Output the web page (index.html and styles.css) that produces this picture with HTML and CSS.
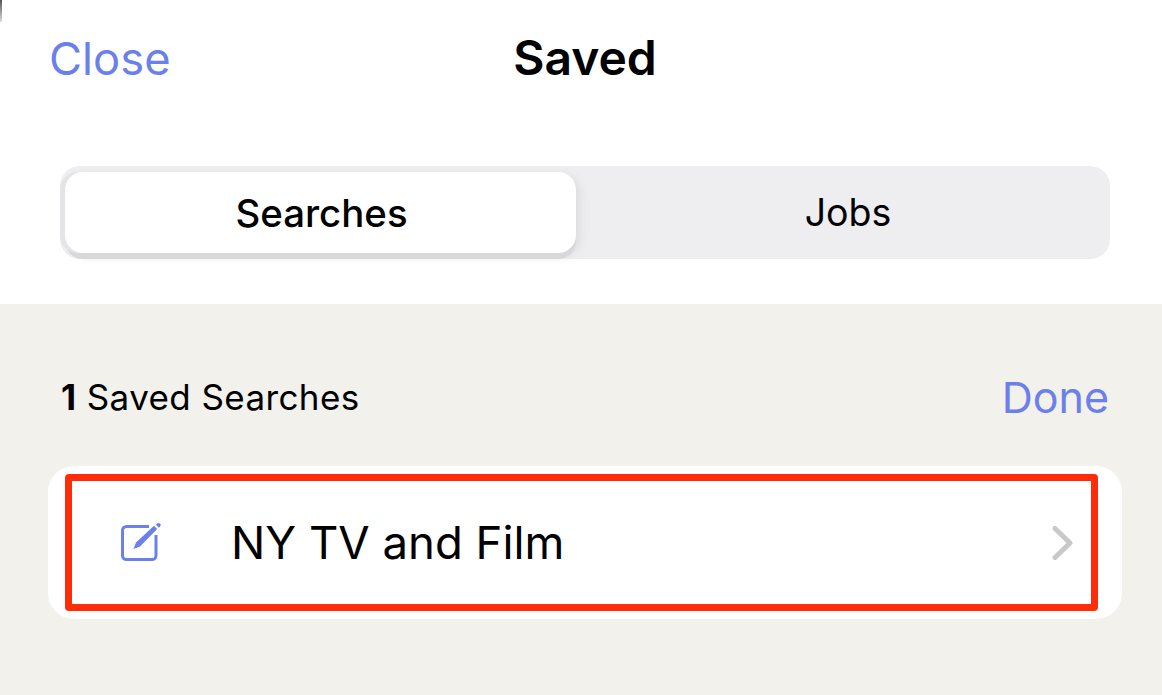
FILE: index.html
```html
<!DOCTYPE html>
<html lang="en">
<head>
<meta charset="utf-8">
<title>Saved</title>
<link rel="stylesheet" href="styles.css">
</head>
<body>
<div class="screen">
  <div class="corner"></div>
  <header class="top">
    <div class="nav">
      <a class="link close">Close</a>
      <h1 class="title">Saved</h1>
    </div>
    <div class="segments">
      <div class="segment active">Searches</div>
      <div class="segment">Jobs</div>
    </div>
  </header>
  <main class="body">
    <div class="list-head">
      <div class="count"><b>1</b> Saved Searches</div>
      <a class="link done">Done</a>
    </div>
    <div class="card">
      <svg class="edit" viewBox="0 0 42 42" width="42" height="42" fill="none">
        <path d="M29 4.500H6.500a4 4 0 0 0-4 4V33.500a4 4 0 0 0 4 4H32a4 4 0 0 0 4-4V13" stroke="#6b80ea" stroke-width="3"/>
        <path d="M13.500 27L16 20.500 34 3.800l3.200 3.200L20 24.500z" fill="#6b80ea"/>
        <path d="M36 2.800l1.200-1.200a2 2 0 0 1 2.900 2.900L38.900 5.700z" fill="#6b80ea"/>
      </svg>
      <span class="name">NY TV and Film</span>
      <svg class="chev" viewBox="0 0 22 36" width="22" height="36" fill="none">
        <path d="M3 3.500L18 18 3 32.500" stroke="#c8c8c8" stroke-width="5" stroke-linecap="round" stroke-linejoin="round"/>
      </svg>
      <div class="highlight"></div>
    </div>
  </main>
</div>
</body>
</html>
```
FILE: styles.css
```css
* { box-sizing: border-box; }
html, body { margin: 0; padding: 0; height: 100%; }
body { font-family: Inter, "Liberation Sans", sans-serif; color: #000; background: #f2f1ec; overflow: hidden; }
.screen { position: relative; width: 1162px; height: 695px; display: flex; flex-direction: column; }
.corner { position: absolute; left: 0; top: 0; width: 2px; height: 22px; background: linear-gradient(#555, #ddd); }
.top { height: 304px; background: #fff; padding: 0 52px 0 60px; }
.nav { position: relative; height: 166px; padding-top: 32px; display: flex; justify-content: center; }
.link { color: #6b80ea; font-size: 43px; line-height: 52px; }
.close { position: absolute; left: -11px; top: 33px; font-size: 45.300px; }
.title { margin: 0; font-size: 48px; line-height: 52px; font-weight: 600; }
.segments { height: 93px; width: 1050px; background: #eeeef0; border-radius: 20px; padding: 6px 0 6px 5px; display: flex; }
.segment { flex: 1; display: flex; align-items: center; justify-content: center; font-size: 37.500px; padding-left: 10px; }
.segment.active { flex: 0 0 511px; background: #fff; border-radius: 18px; font-weight: 500; font-size: 38.400px; padding-left: 2px; box-shadow: -5px 0 0 #e4e4e7, 0 6px 0 #d8d8db, 4px 3px 10px #dcdcdf; }
.body { flex: 1; padding: 0 40px 0 48px; }
.list-head { display: flex; justify-content: space-between; align-items: center; height: 52px; margin-top: 67px; padding: 0 13px; }
.count { font-size: 35px; letter-spacing: 0.4px; }
.count b { font-weight: 700; }
.card { position: relative; margin-top: 43px; width: 1074px; height: 153px; background: #fff; border-radius: 26px; display: flex; align-items: center; padding: 0 48px 0 72px; }
.edit { flex: none; margin-right: 69px; }
.name { flex: 1; font-size: 45.500px; }
.chev { flex: none; }
.highlight { position: absolute; left: 17px; top: 8px; width: 1033px; height: 137px; border: 7px solid #ff2c0a; border-radius: 4px; }
```
